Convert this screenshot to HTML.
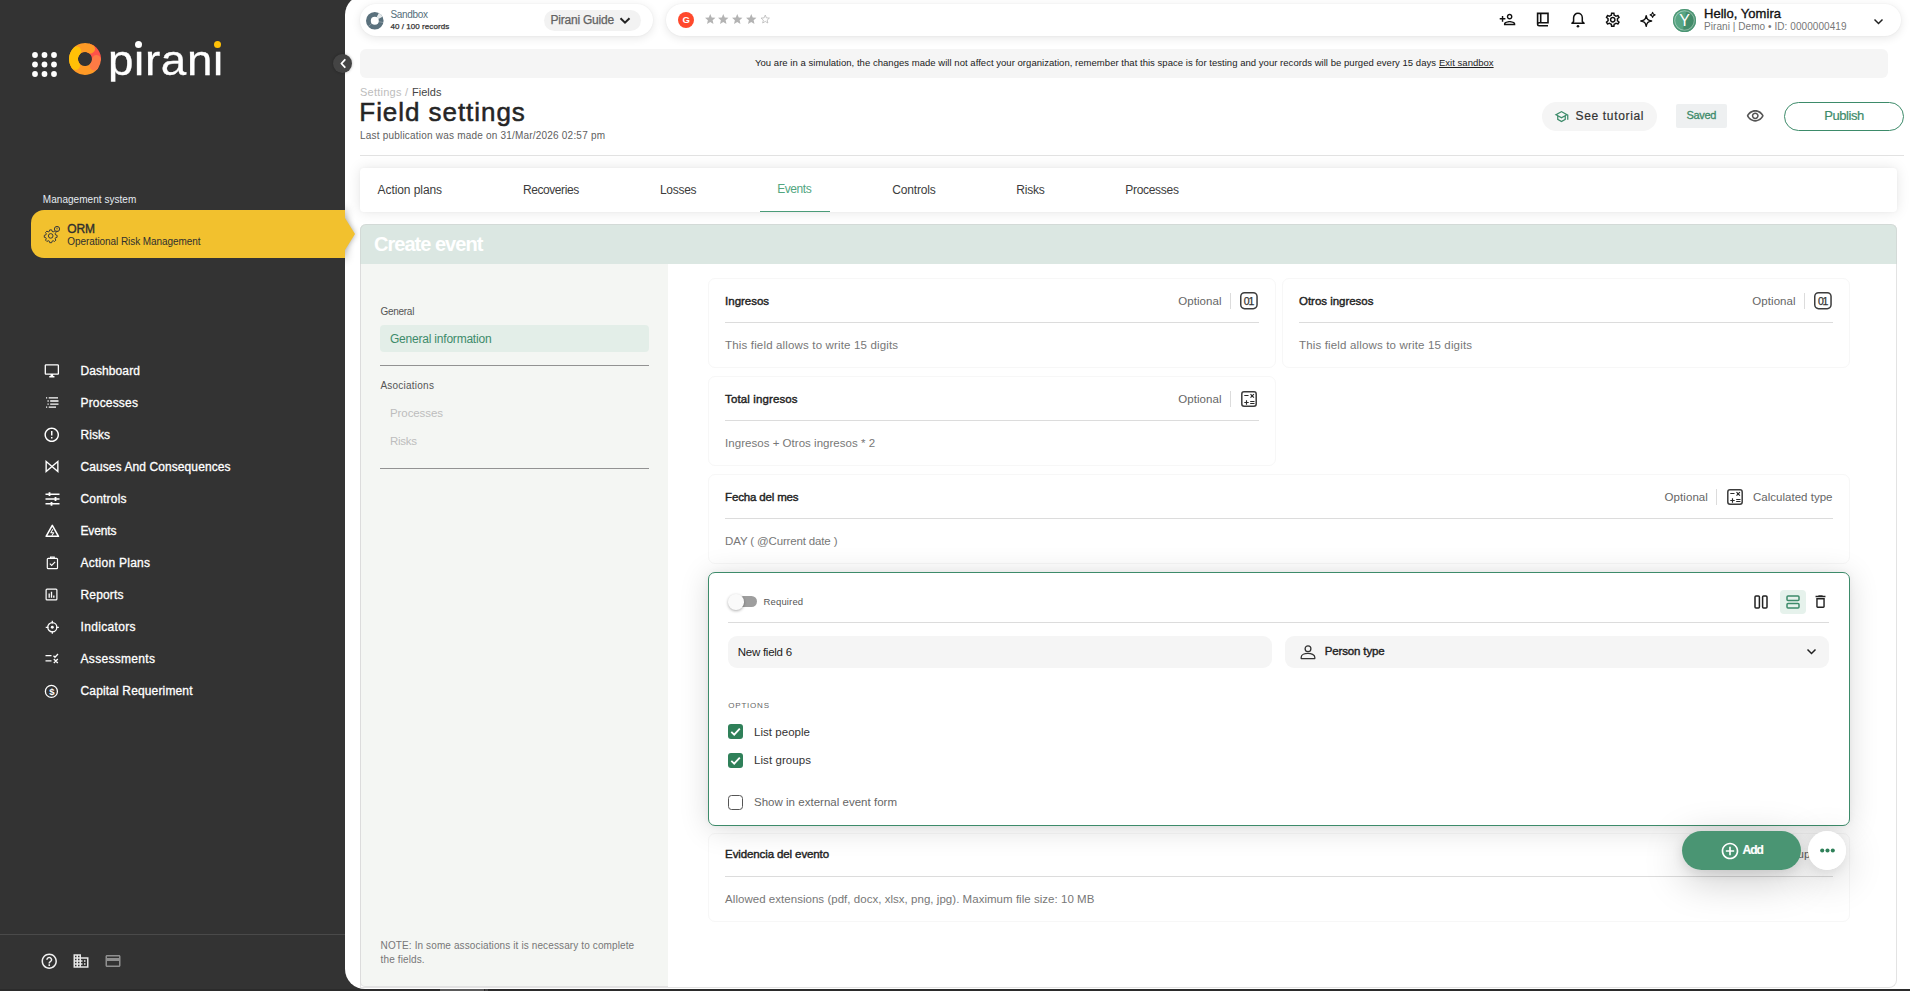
<!DOCTYPE html>
<html lang="en">
<head>
<meta charset="utf-8">
<title>Field settings - Pirani</title>
<style>
html,body{margin:0;padding:0;}
body{width:1910px;height:991px;overflow:hidden;background:#333333;font-family:"Liberation Sans",sans-serif;}
#root{position:relative;width:1910px;height:991px;overflow:hidden;background:#333333;}
.b{position:absolute;box-sizing:border-box;}
.t{position:absolute;white-space:pre;line-height:1;}
.i{position:absolute;display:block;overflow:visible;}
.card{position:absolute;box-sizing:border-box;background:#fff;border:1px solid #f7f7f7;border-radius:7px;}
.hr{position:absolute;height:1px;background:#dcdcdc;}
</style>
</head>
<body>
<div id="root">
<div class="b" style="left:345px;top:-5px;width:1565px;height:994px;background:#fff;border-radius:20px 0 0 20px;"></div>
<div class="b" style="left:0px;top:989px;width:1910px;height:2px;background:#2b2b2b;"></div>
<div class="b" style="left:440px;top:989px;width:44px;height:2px;background:#5a5a5a;"></div>
<div class="b" style="left:485px;top:989px;width:3px;height:2px;background:#444;"></div>
<aside id="sidebar">
<svg class="i" style="left:31.5px;top:52px;width:25px;height:25px;" viewBox="0 0 25 25" fill="#fff"><circle cx="3.0" cy="3.0" r="2.9"/><circle cx="12.5" cy="3.0" r="2.9"/><circle cx="22.0" cy="3.0" r="2.9"/><circle cx="3.0" cy="12.5" r="2.9"/><circle cx="12.5" cy="12.5" r="2.9"/><circle cx="22.0" cy="12.5" r="2.9"/><circle cx="3.0" cy="22.0" r="2.9"/><circle cx="12.5" cy="22.0" r="2.9"/><circle cx="22.0" cy="22.0" r="2.9"/></svg>
<svg class="i" style="left:69px;top:43px;width:32px;height:32px;" viewBox="0 0 32 32" fill="none" stroke-width="9">
<path d="M18.98 4.89A11.5 11.5 0 0 1 27.46 17.00" stroke="#ff5349"/>
<path d="M24.94 23.24A11.5 11.5 0 1 1 21.58 5.94" stroke="#ff9a26" stroke-linecap="round"/>
<path d="M27.48 16.60A11.5 11.5 0 0 1 25.18 22.92" stroke="#ff7a45" stroke-linecap="round"/>
<path d="M6.47 22.43A11.5 11.5 0 0 1 7.73 8.01" stroke="#ffc107" stroke-linecap="round"/>
</svg>
<span class="t" style="left:108.0px;top:40.00px;font-size:42px;color:#ffffff;letter-spacing:0.600px;-webkit-text-stroke:0.3px #ffffff;transform:scaleX(1.090);transform-origin:0 0;clip-path:inset(-10px -10px 0.300px -10px);">pirani</span>
<div class="b" style="left:135px;top:41px;width:8px;height:8.5px;background:#333333;"></div>
<div class="b" style="left:214px;top:41px;width:8px;height:8.5px;background:#333333;"></div>
<div class="b" style="left:135.4px;top:40.8px;width:7.0px;height:7.0px;background:#fff;border-radius:50%;"></div>
<div class="b" style="left:214.2px;top:40.8px;width:7.0px;height:7.0px;background:#ffc107;border-radius:50%;"></div>
<div class="b" style="left:333px;top:54px;width:19px;height:19px;background:#444;border-radius:50%;box-shadow:0 0 3px rgba(0,0,0,.3);"></div>
<svg class="i" style="left:338px;top:58px;width:11px;height:11px;" viewBox="0 0 11 11" fill="none" stroke="#fff" stroke-width="1.800" stroke-linecap="round" stroke-linejoin="round"><path d="M6.800 1.800L3.400 5.500L6.800 9.200"/></svg>
<span class="t" style="left:42.8px;top:195.00px;font-size:10px;color:#e6ecf2;letter-spacing:0.042px;">Management system</span>
<div class="b" style="left:31px;top:210px;width:314px;height:48px;background:#f2c12e;border-radius:13px 0 0 13px;"></div>
<div class="b" style="left:345px;top:190px;width:40px;height:90px;overflow:hidden;"><div class="b" style="left:-30px;top:20px;width:30px;height:48px;box-shadow:0 0 10px rgba(0,0,0,.42);"></div><svg class="i" style="left:-2px;top:27px;width:14px;height:34px;filter:blur(3px);" viewBox="0 0 14 34"><path d="M0 1L12 17L0 33z" fill="rgba(0,0,0,.38)"/></svg></div>
<svg class="i" style="left:345px;top:217px;width:11px;height:34px;" viewBox="0 0 11 34"><path d="M0 1L10 17L0 33z" fill="#f2c12e"/></svg>
<span class="t" style="left:67.3px;top:223.00px;font-size:12px;color:#2f2f2f;letter-spacing:-0.100px;-webkit-text-stroke:0.35px #2f2f2f;">ORM</span>
<span class="t" style="left:67.3px;top:237.00px;font-size:10px;color:#2f2f2f;letter-spacing:-0.068px;">Operational Risk Management</span>
<span class="t" style="left:80.5px;top:365.00px;font-size:12px;color:#ffffff;letter-spacing:0.085px;-webkit-text-stroke:0.3px #ffffff;">Dashboard</span>
<span class="t" style="left:80.5px;top:397.00px;font-size:12px;color:#ffffff;letter-spacing:0.171px;-webkit-text-stroke:0.3px #ffffff;">Processes</span>
<span class="t" style="left:80.5px;top:429.00px;font-size:12px;color:#ffffff;letter-spacing:0.039px;-webkit-text-stroke:0.3px #ffffff;">Risks</span>
<span class="t" style="left:80.5px;top:461.00px;font-size:12px;color:#ffffff;letter-spacing:0.086px;-webkit-text-stroke:0.3px #ffffff;">Causes And Consequences</span>
<span class="t" style="left:80.5px;top:493.00px;font-size:12px;color:#ffffff;letter-spacing:0.188px;-webkit-text-stroke:0.3px #ffffff;">Controls</span>
<span class="t" style="left:80.5px;top:525.00px;font-size:12px;color:#ffffff;letter-spacing:-0.138px;-webkit-text-stroke:0.3px #ffffff;">Events</span>
<span class="t" style="left:80.5px;top:557.00px;font-size:12px;color:#ffffff;letter-spacing:0.254px;-webkit-text-stroke:0.3px #ffffff;">Action Plans</span>
<span class="t" style="left:80.5px;top:589.00px;font-size:12px;color:#ffffff;letter-spacing:0.161px;-webkit-text-stroke:0.3px #ffffff;">Reports</span>
<span class="t" style="left:80.5px;top:621.00px;font-size:12px;color:#ffffff;letter-spacing:0.330px;-webkit-text-stroke:0.3px #ffffff;">Indicators</span>
<span class="t" style="left:80.5px;top:653.00px;font-size:12px;color:#ffffff;letter-spacing:0.314px;-webkit-text-stroke:0.3px #ffffff;">Assessments</span>
<span class="t" style="left:80.5px;top:685.00px;font-size:12px;color:#ffffff;letter-spacing:0.145px;-webkit-text-stroke:0.3px #ffffff;">Capital Requeriment</span>
<div class="b" style="left:0px;top:934px;width:345px;height:1px;background:#4a4a4a;"></div>
<svg class="i" style="left:43px;top:225px;width:18px;height:18px;" viewBox="0 0 18 18" fill="none" stroke="#3a3a3a" stroke-width="1"><path d="M7.300 4.300h2l.35 1.500 1.150.5 1.300-.8 1.400 1.400-.8 1.300.5 1.150 1.500.35v2l-1.500.35-.5 1.150.8 1.300-1.400 1.400-1.300-.8-1.150.5-.35 1.500h-2l-.35-1.500-1.150-.5-1.300.8-1.400-1.400.8-1.300-.5-1.150-1.500-.35v-2l1.500-.35.5-1.150-.8-1.300 1.400-1.400 1.300.8 1.150-.5z" transform="translate(-.6 .6)"/><circle cx="7.700" cy="10.900" r="2.300"/><circle cx="14" cy="4" r="2.600" fill="#f2c12e"/><path d="M14 2.600v1.700M14 5.100v.5" stroke-width=".9"/></svg>
<svg class="i" style="left:44.1px;top:363.0px;width:15.7px;height:15.7px;color:#ffffff;" viewBox="0 0 24 24" fill="currentColor"><path d="M21 2H3c-1.100 0-2 .9-2 2v12c0 1.100.9 2 2 2h7v2H8v2h8v-2h-2v-2h7c1.100 0 2-.9 2-2V4c0-1.100-.9-2-2-2zm0 14H3V4h18v12z"/></svg>
<svg class="i" style="left:45px;top:397.2px;width:14px;height:11px;" viewBox="0 0 14 11" fill="none" stroke="#fff" stroke-width="1.300"><path d="M1 .9h1.200M3.700 .9h9.300M2.500 4h1.200M5.200 4h8.300M2.500 7.100h1.200M5.200 7.100h8.300M1 10.100h1.200M3.700 10.100h7.300"/></svg>
<svg class="i" style="left:43.0px;top:425.9px;width:17.5px;height:17.5px;color:#ffffff;" viewBox="0 0 24 24" fill="currentColor"><path d="M11 15h2v2h-2zm0-8h2v6h-2zm.990-5C6.470 2 2 6.480 2 12s4.470 10 9.990 10C17.520 22 22 17.520 22 12S17.520 2 11.990 2zM12 20c-4.420 0-8-3.580-8-8s3.580-8 8-8 8 3.580 8 8-3.580 8-8 8z"/></svg>
<svg class="i" style="left:45px;top:460.4px;width:14px;height:13px;" viewBox="0 0 15 14" fill="none" stroke="#fff" stroke-width="1.500" stroke-linejoin="miter"><path d="M1.200 1.600L7.500 7L1.200 12.400zM13.800 1.600L7.500 7L13.800 12.400z"/></svg>
<svg class="i" style="left:44.500px;top:491.7px;width:15px;height:14px;" viewBox="0 0 15 14" fill="none" stroke="#fff" stroke-width="1.400"><path d="M.5 2.200h14M.5 7h14M.5 11.800h14"/><path d="M4.500 .3v3.800M10.500 5.100v3.800M6.500 9.900v3.800" stroke-width="1.800"/></svg>
<svg class="i" style="left:44.700px;top:523.5px;width:14.600px;height:13.700px;" viewBox="0 0 16 15" fill="none" stroke="#fff" stroke-width="1.400" stroke-linejoin="round"><path d="M8 1.500L14.800 13.500H1.200z" stroke-width="1.700"/><path d="M8.600 5.800L6.400 9.600h3.200L7.400 12.800" stroke-width="1.100"/></svg>
<svg class="i" style="left:45.600px;top:556.1px;width:12.800px;height:13.700px;" viewBox="0 0 14 15" fill="none" stroke="#fff" stroke-width="1.300"><rect x="1.400" y="2.600" width="11.200" height="11.200" rx="1"/><path d="M5 2.600V1.200h4v1.400" /><path d="M4.200 8.400l2 2 3.800-3.900"/></svg>
<svg class="i" style="left:45.400px;top:588.3000000000001px;width:13px;height:13px;" viewBox="0 0 14 14" fill="none" stroke="#fff" stroke-width="1.300"><rect x="1.200" y="1.200" width="11.600" height="11.600" rx="1"/><path d="M4.500 6v4.500M7 4v6.500M9.500 8v2.500" stroke-width="1.400"/></svg>
<svg class="i" style="left:44.700px;top:619.5px;width:14.600px;height:14.600px;" viewBox="0 0 16 16" fill="none" stroke="#fff" stroke-width="1.400"><circle cx="8" cy="8" r="5"/><path d="M8 .8v3M8 12.200v3M.8 8h3M12.200 8h3"/><circle cx="8" cy="8" r="1.600" fill="#fff" stroke="none"/></svg>
<svg class="i" style="left:45px;top:653.2px;width:14px;height:11px;" viewBox="0 0 14 11" fill="none" stroke="#fff" stroke-width="1.300"><path d="M.5 2.600h6M.5 7.800h6M8.500 2.700l1.500 1.500 3-3.200M8.800 6l4 4M12.800 6l-4 4"/></svg>
<svg class="i" style="left:44.300px;top:683.8000000000001px;width:14.800px;height:14.800px;" viewBox="0 0 16 16" fill="none" stroke="#fff" stroke-width="1.400"><circle cx="8" cy="8" r="6.500"/></svg>
<span class="t" style="left:49.3px;top:687.00px;font-size:9.5px;color:#ffffff;font-weight:700;">$</span>
<svg class="i" style="left:40.2px;top:952.0px;width:18.5px;height:18.5px;color:#f0f0f0;" viewBox="0 0 24 24" fill="currentColor"><path d="M11 18h2v-2h-2v2zm1-16C6.480 2 2 6.480 2 12s4.480 10 10 10 10-4.480 10-10S17.520 2 12 2zm0 18c-4.410 0-8-3.590-8-8s3.590-8 8-8 8 3.590 8 8-3.590 8-8 8zm0-14c-2.210 0-4 1.790-4 4h2c0-1.100.9-2 2-2s2 .9 2 2c0 2-3 1.750-3 5h2c0-2.250 3-2.500 3-5 0-2.210-1.790-4-4-4z"/></svg>
<svg class="i" style="left:72.0px;top:952.2px;width:18px;height:18px;color:#e8e8e8;" viewBox="0 0 24 24" fill="currentColor"><path d="M12 7V3H2v18h20V7H12zM6 19H4v-2h2v2zm0-4H4v-2h2v2zm0-4H4V9h2v2zm0-4H4V5h2v2zm4 12H8v-2h2v2zm0-4H8v-2h2v2zm0-4H8V9h2v2zm0-4H8V5h2v2zm10 12h-8v-2h2v-2h-2v-2h2v-2h-2V9h8v10zm-2-8h-2v2h2v-2zm0 4h-2v2h2v-2z"/></svg>
<svg class="i" style="left:103.5px;top:952.2px;width:18px;height:18px;color:#8f8f8f;" viewBox="0 0 24 24" fill="currentColor"><path d="M20 4H4c-1.110 0-1.990.890-1.990 2L2 18c0 1.110.890 2 2 2h16c1.110 0 2-.890 2-2V6c0-1.110-.890-2-2-2zm0 14H4v-6h16v6zm0-10H4V6h16v2z"/></svg>
</aside>
<header id="topbar">
<div class="b" style="left:360px;top:4px;width:293px;height:32px;background:#fff;border-radius:16px;box-shadow:0 2px 10px rgba(0,0,0,.10),0 0 2px rgba(0,0,0,.05);"></div>
<div class="b" style="left:666px;top:4px;width:1235px;height:32px;background:#fff;border-radius:16px;box-shadow:0 2px 10px rgba(0,0,0,.10),0 0 2px rgba(0,0,0,.05);"></div>
<svg class="i" style="left:366px;top:11.700px;width:17.600px;height:17.600px;" viewBox="0 0 17.600 17.600" fill="none" stroke-width="4.400"><circle cx="8.800" cy="8.800" r="6.400" stroke="#5a717d" stroke-width="4.800"/><path d="M11.800 3.150A6.400 6.400 0 0 1 14.450 5.800" stroke="#e3e8ea" stroke-width="4.800"/><path d="M8.800 8.800L13.700 .8M8.800 8.800L17.500 10.600M8.800 8.800L2 14.800" stroke="#fff" stroke-width=".5" opacity=".55"/></svg>
<span class="t" style="left:390.4px;top:10.00px;font-size:10px;color:#546e7a;letter-spacing:-0.331px;">Sandbox</span>
<span class="t" style="left:390.4px;top:23.00px;font-size:8px;color:#333;letter-spacing:0.066px;-webkit-text-stroke:0.25px #333;">40 / 100 records</span>
<div class="b" style="left:544px;top:10px;width:97px;height:21px;background:#f2f2f2;border-radius:11px;"></div>
<span class="t" style="left:550.6px;top:14.00px;font-size:12px;color:#636363;letter-spacing:-0.232px;-webkit-text-stroke:0.25px #636363;">Pirani Guide</span>
<svg class="i" style="left:619.300px;top:15.700px;width:12px;height:9px;" viewBox="0 0 12 9" fill="none" stroke="#222" stroke-width="2"><path d="M1.500 2.200L6 6.700L10.500 2.200"/></svg>
<div class="b" style="left:678px;top:12px;width:16px;height:16px;background:#ff492c;border-radius:50%;"></div>
<span class="t" style="left:682.6px;top:15.00px;font-size:9.5px;color:#fff;font-weight:700;">G</span>
<svg class="i" style="left:703.5px;top:13.4px;width:12.5px;height:12.5px;color:#b3b3b3;" viewBox="0 0 24 24" fill="currentColor"><path d="M12 17.270L18.180 21l-1.640-7.030L22 9.240l-7.190-.610L12 2 9.190 8.630 2 9.240l5.460 4.730L5.820 21z"/></svg>
<svg class="i" style="left:717.3px;top:13.4px;width:12.5px;height:12.5px;color:#b3b3b3;" viewBox="0 0 24 24" fill="currentColor"><path d="M12 17.270L18.180 21l-1.640-7.030L22 9.240l-7.190-.610L12 2 9.190 8.630 2 9.240l5.460 4.730L5.820 21z"/></svg>
<svg class="i" style="left:731.1px;top:13.4px;width:12.5px;height:12.5px;color:#b3b3b3;" viewBox="0 0 24 24" fill="currentColor"><path d="M12 17.270L18.180 21l-1.640-7.030L22 9.240l-7.190-.610L12 2 9.190 8.630 2 9.240l5.460 4.730L5.820 21z"/></svg>
<svg class="i" style="left:744.9px;top:13.4px;width:12.5px;height:12.5px;color:#b3b3b3;" viewBox="0 0 24 24" fill="currentColor"><path d="M12 17.270L18.180 21l-1.640-7.030L22 9.240l-7.190-.610L12 2 9.190 8.630 2 9.240l5.460 4.730L5.820 21z"/></svg>
<svg class="i" style="left:758.8px;top:13.4px;width:12.5px;height:12.5px;color:#b3b3b3;" viewBox="0 0 24 24" fill="currentColor"><path d="M12 17.270L18.180 21l-1.640-7.030L22 9.240l-7.190-.610L12 2 9.190 8.630 2 9.240l5.460 4.730L5.820 21z" fill="none" stroke="currentColor" stroke-width="1.800" stroke-linejoin="round" transform="translate(2.400 2.400) scale(.8)"/></svg>
<svg class="i" style="left:1499.2px;top:11.2px;width:17px;height:17px;color:#111;" viewBox="0 0 24 24" fill="currentColor"><path d="M15 12c2.210 0 4-1.790 4-4s-1.790-4-4-4-4 1.790-4 4 1.790 4 4 4zm0-6c1.100 0 2 .9 2 2s-.9 2-2 2-2-.9-2-2 .9-2 2-2zm0 8c-2.670 0-8 1.340-8 4v2h16v-2c0-2.660-5.330-4-8-4zm-6 4c.220-.720 3.310-2 6-2 2.700 0 5.800 1.290 6 2H9zm-3-3v-3h3v-2H6V7H4v3H1v2h3v3z"/></svg>
<svg class="i" style="left:1536px;top:12.400px;width:13.500px;height:14.500px;" viewBox="0 0 13.500 14.500" fill="none" stroke="#111" stroke-width="1.600"><path d="M1.600 12.300V1.400h10.400v9.400H3.100c-.8 0-1.500.6-1.500 1.500s.7 1.500 1.500 1.500h8.900"/><path d="M4.700 1.400v9.400"/></svg>
<svg class="i" style="left:1571px;top:12px;width:14px;height:16px;" viewBox="0 0 14 16" fill="none" stroke="#111" stroke-width="1.500" stroke-linejoin="round"><path d="M2.600 9.600V5.700a4.350 4.350 0 0 1 8.700 0V9.600l1.800 1.700H.9z"/><circle cx="6.950" cy="14.200" r="1.300" fill="#111" stroke="none"/></svg>
<svg class="i" style="left:1604.0px;top:11.1px;width:17.5px;height:17.5px;color:#111;" viewBox="0 0 24 24" fill="currentColor"><path d="M19.43 12.98c.04-.32.07-.64.07-.98 0-.34-.03-.66-.07-.98l2.110-1.650c.19-.15.24-.42.12-.64l-2-3.460c-.09-.16-.26-.25-.44-.25-.06 0-.12.01-.17.03l-2.490 1c-.52-.4-1.080-.73-1.690-.98l-.38-2.650C14.460 2.180 14.250 2 14 2h-4c-.25 0-.46.18-.49.42l-.38 2.650c-.61.25-1.170.59-1.690.98l-2.490-1c-.06-.02-.12-.03-.18-.03-.17 0-.34.09-.43.25l-2 3.460c-.13.22-.07.49.12.64l2.110 1.650c-.04.32-.07.65-.07.98 0 .33.03.66.07.98l-2.110 1.650c-.19.15-.24.42-.12.64l2 3.460c.09.16.26.25.44.25.06 0 .12-.01.17-.03l2.490-1c.52.4 1.080.73 1.690.98l.38 2.650c.03.24.24.42.49.42h4c.25 0 .46-.18.49-.42l.38-2.650c.61-.25 1.170-.59 1.690-.98l2.490 1c.06.02.12.03.18.03.17 0 .34-.09.43-.25l2-3.460c.12-.22.07-.49-.12-.64l-2.110-1.650zm-1.980-1.710c.04.31.05.52.05.73 0 .21-.02.43-.05.73l-.14 1.130.89.7 1.080.84-.7 1.210-1.270-.51-1.040-.42-.9.68c-.43.32-.84.56-1.250.73l-1.060.43-.16 1.130-.2 1.350h-1.400l-.19-1.350-.16-1.130-1.060-.43c-.43-.18-.83-.41-1.230-.71l-.91-.7-1.060.43-1.270.51-.7-1.210 1.080-.84.89-.7-.14-1.130c-.03-.31-.05-.54-.05-.74s.02-.43.05-.73l.14-1.130-.89-.7-1.080-.84.7-1.210 1.270.51 1.040.42.9-.68c.43-.32.84-.56 1.250-.73l1.060-.43.16-1.130.2-1.350h1.390l.19 1.350.16 1.130 1.060.43c.43.18.83.41 1.230.71l.91.7 1.060-.43 1.270-.51.7 1.210-1.070.85-.89.7.14 1.130zM12 8c-2.210 0-4 1.790-4 4s1.790 4 4 4 4-1.790 4-4-1.790-4-4-4zm0 6c-1.100 0-2-.9-2-2s.9-2 2-2 2 .9 2 2-.9 2-2 2z"/></svg>
<svg class="i" style="left:1638.500px;top:10.500px;width:18px;height:18px;" viewBox="0 0 18 18" fill="none" stroke="#111" stroke-width="1.400" stroke-linejoin="round"><path d="M7.200 4.600C7.900 8.300 8.900 9.300 12.600 10 8.900 10.700 7.900 11.700 7.200 15.400 6.500 11.700 5.500 10.700 1.800 10 5.500 9.300 6.500 8.300 7.200 4.600z"/><path d="M13.600 1.400c.3 1.700.8 2.200 2.500 2.500-1.700.3-2.200.8-2.500 2.500-.3-1.700-.8-2.200-2.500-2.500 1.700-.3 2.200-.8 2.500-2.500z" stroke-width="1.100"/></svg>
<div class="b" style="left:1673px;top:9px;width:23px;height:23px;background:linear-gradient(100deg,#5aa886 0%,#57a583 47%,#448d6b 53%,#408967 100%);border-radius:50%;box-shadow:inset 0 0 0 1.200px #4a9573,inset 0 0 0 2.200px rgba(255,255,255,.38);"></div>
<span class="t" style="left:1679.2px;top:13.00px;font-size:16px;color:#fff;">Y</span>
<span class="t" style="left:1704.0px;top:7.00px;font-size:13px;color:#111;letter-spacing:0.033px;-webkit-text-stroke:0.35px #111;">Hello, Yomira</span>
<span class="t" style="left:1704.0px;top:22.00px;font-size:10px;color:#777;letter-spacing:0.065px;">Pirani | Demo • ID: 0000000419</span>
<svg class="i" style="left:1872.500px;top:16.500px;width:11px;height:9px;" viewBox="0 0 11 9" fill="none" stroke="#222" stroke-width="1.500"><path d="M1.500 2.500L5.500 6.500L9.500 2.500"/></svg>
<div class="b" style="left:360px;top:49px;width:1528px;height:29px;background:#f5f5f5;border-radius:6px;"></div>
<span class="t" style="left:755.0px;top:58.00px;font-size:9.5px;color:#222;letter-spacing:0.035px;">You are in a simulation, the changes made will not affect your organization, remember that this space is for testing and your records will be purged every 15 days</span>
<span class="t" style="left:1439.0px;top:58.00px;font-size:9.5px;color:#222;letter-spacing:0.018px;text-decoration:underline;">Exit sandbox</span>
</header>
<main id="content">
<section id="page-header">
<span class="t" style="left:360.0px;top:87.00px;font-size:11px;color:#bdbdbd;letter-spacing:0.238px;">Settings /</span>
<span class="t" style="left:412.0px;top:87.00px;font-size:11px;color:#444;letter-spacing:0.031px;">Fields</span>
<span class="t" style="left:359.3px;top:99.00px;font-size:26px;color:#252525;letter-spacing:0.947px;-webkit-text-stroke:0.5px #252525;">Field settings</span>
<span class="t" style="left:360.0px;top:131.00px;font-size:10px;color:#606060;letter-spacing:0.205px;">Last publication was made on 31/Mar/2026 02:57 pm</span>
<div class="b" style="left:360px;top:155px;width:1544px;height:1px;background:#e2e2e2;"></div>
<div class="b" style="left:1542px;top:102px;width:115px;height:29px;background:#f5f5f5;border-radius:15px;"></div>
<svg class="i" style="left:1554.0px;top:109.0px;width:15px;height:15px;color:#3d8b6a;" viewBox="0 0 24 24" fill="currentColor"><path d="M12 3L1 9l4 2.180v6L12 21l7-3.820v-6l2-1.090V17h2V9L12 3zm6.820 6L12 12.720 5.180 9 12 5.280 18.820 9zM17 15.990l-5 2.730-5-2.730v-3.720L12 15l5-2.730v3.720z"/></svg>
<span class="t" style="left:1575.5px;top:110.00px;font-size:12px;color:#333;letter-spacing:0.663px;-webkit-text-stroke:0.2px #333;">See tutorial</span>
<div class="b" style="left:1676px;top:104px;width:51px;height:24px;background:#eef0f1;border-radius:2px;"></div>
<span class="t" style="left:1686.4px;top:110.00px;font-size:11px;color:#3d8b6a;letter-spacing:-0.301px;-webkit-text-stroke:0.3px #3d8b6a;">Saved</span>
<svg class="i" style="left:1746.3px;top:106.8px;width:18.5px;height:18.5px;color:#555;" viewBox="0 0 24 24" fill="currentColor"><path d="M12 6c3.790 0 7.170 2.130 8.820 5.500C19.170 14.870 15.790 17 12 17s-7.170-2.130-8.820-5.500C4.830 8.130 8.210 6 12 6m0-2C7 4 2.730 7.110 1 11.500 2.730 15.890 7 19 12 19s9.270-3.110 11-7.500C21.270 7.110 17 4 12 4zm0 5c1.380 0 2.500 1.120 2.500 2.500S13.380 14 12 14s-2.500-1.120-2.500-2.500S10.620 9 12 9m0-2c-2.480 0-4.500 2.020-4.500 4.500S9.520 16 12 16s4.500-2.020 4.500-4.500S14.480 7 12 7z"/></svg>
<div class="b" style="left:1784px;top:102px;width:120px;height:29px;border:1px solid #3d8b6a;border-radius:15px;background:#fff;"></div>
<span class="t" style="left:1824.3px;top:109.00px;font-size:13px;color:#3d8b6a;letter-spacing:-0.440px;-webkit-text-stroke:0.2px #3d8b6a;">Publish</span>
</section>
<nav id="tabs">
<div class="b" style="left:360px;top:168px;width:1537px;height:44px;background:#fff;border-radius:4px;box-shadow:0 0 14px rgba(0,0,0,.10),0 0 3px rgba(0,0,0,.04);"></div>
<span class="t" style="left:377.6px;top:184.00px;font-size:12px;color:#3c3c3c;letter-spacing:-0.080px;">Action plans</span>
<span class="t" style="left:522.9px;top:184.00px;font-size:12px;color:#3c3c3c;letter-spacing:-0.415px;">Recoveries</span>
<span class="t" style="left:659.9px;top:184.00px;font-size:12px;color:#3c3c3c;letter-spacing:-0.266px;">Losses</span>
<span class="t" style="left:892.3px;top:184.00px;font-size:12px;color:#3c3c3c;letter-spacing:-0.170px;">Controls</span>
<span class="t" style="left:1016.3px;top:184.00px;font-size:12px;color:#3c3c3c;letter-spacing:-0.236px;">Risks</span>
<span class="t" style="left:1125.3px;top:184.00px;font-size:12px;color:#3c3c3c;letter-spacing:-0.304px;">Processes</span>
<span class="t" style="left:777.2px;top:183.00px;font-size:12px;color:#52a680;letter-spacing:-0.438px;">Events</span>
<div class="b" style="left:760px;top:210.5px;width:70px;height:1.5px;background:#4a9b78;"></div>
</nav>
<section id="form">
<div class="b" style="left:360px;top:224px;width:1537px;height:764px;background:#fff;border:1px solid #e3e3e3;border-top:none;border-radius:6px 6px 8px 0;"></div>
<div class="b" style="left:360px;top:224px;width:1537px;height:40px;background:#dbe7e2;border-radius:6px 6px 0 0;border:1px solid #d3dad7;border-bottom:none;"></div>
<span class="t" style="left:374.0px;top:234.00px;font-size:20px;color:#ffffff;font-weight:700;letter-spacing:-0.978px;">Create event</span>
<div class="b" style="left:360px;top:264px;width:308px;height:723px;background:#f4f6f3;border-left:1px solid #dcdcdc;border-bottom:1px solid #e2e2e2;border-radius:0 0 0 5px;"></div>
<span class="t" style="left:380.4px;top:307.00px;font-size:10px;color:#555;letter-spacing:-0.263px;">General</span>
<div class="b" style="left:380px;top:325px;width:269px;height:27px;background:#e3eee8;border-radius:4px;"></div>
<span class="t" style="left:390.0px;top:333.00px;font-size:12px;color:#3d8b6a;letter-spacing:-0.211px;">General information</span>
<div class="b" style="left:380px;top:365px;width:269px;height:1px;background:#929292;"></div>
<span class="t" style="left:380.4px;top:381.00px;font-size:10px;color:#555;letter-spacing:0.236px;">Asociations</span>
<span class="t" style="left:390.0px;top:408.00px;font-size:11.5px;color:#bdbdbd;letter-spacing:-0.086px;">Processes</span>
<span class="t" style="left:390.0px;top:436.00px;font-size:11.5px;color:#bdbdbd;letter-spacing:-0.281px;">Risks</span>
<div class="b" style="left:380px;top:468px;width:269px;height:1px;background:#929292;"></div>
<span class="t" style="left:380.6px;top:941.00px;font-size:10px;color:#777;letter-spacing:0.118px;">NOTE: In some associations it is necessary to complete</span>
<span class="t" style="left:380.6px;top:955.00px;font-size:10px;color:#777;letter-spacing:0.119px;">the fields.</span>
<div class="card" style="left:708px;top:278px;width:568px;height:90px;"></div>
<span class="t" style="left:725.1px;top:296.00px;font-size:11.5px;color:#222;letter-spacing:-0.016px;-webkit-text-stroke:0.4px #222;">Ingresos</span>
<span class="t" style="left:1178.2px;top:296.00px;font-size:11.5px;color:#666;letter-spacing:0.065px;">Optional</span>
<div class="b" style="left:1230px;top:293px;width:1px;height:16px;background:#dcdcdc;"></div>
<svg class="i" style="left:1240.1999999999998px;top:292.0px;width:17.800px;height:17.400px;" viewBox="0 0 17.800 17.400"><rect x=".75" y=".75" width="16.300" height="15.900" rx="3.800" fill="none" stroke="#3c3c3c" stroke-width="1.500"/></svg>
<span class="t" style="left:1243.8px;top:296.00px;font-size:10.5px;color:#333;letter-spacing:-1.200px;-webkit-text-stroke:0.25px #333;">01</span>
<div class="hr" style="left:725px;top:322px;width:534px;background:#dcdcdc;"></div>
<span class="t" style="left:725.1px;top:340.00px;font-size:11.5px;color:#777;letter-spacing:0.158px;">This field allows to write 15 digits</span>
<div class="card" style="left:1282px;top:278px;width:568px;height:90px;"></div>
<span class="t" style="left:1299.0px;top:296.00px;font-size:11.5px;color:#222;letter-spacing:-0.029px;-webkit-text-stroke:0.4px #222;">Otros ingresos</span>
<span class="t" style="left:1752.3px;top:296.00px;font-size:11.5px;color:#666;letter-spacing:0.065px;">Optional</span>
<div class="b" style="left:1804px;top:293px;width:1px;height:16px;background:#dcdcdc;"></div>
<svg class="i" style="left:1814.3px;top:292.0px;width:17.800px;height:17.400px;" viewBox="0 0 17.800 17.400"><rect x=".75" y=".75" width="16.300" height="15.900" rx="3.800" fill="none" stroke="#3c3c3c" stroke-width="1.500"/></svg>
<span class="t" style="left:1817.9px;top:296.00px;font-size:10.5px;color:#333;letter-spacing:-1.200px;-webkit-text-stroke:0.25px #333;">01</span>
<div class="hr" style="left:1299px;top:322px;width:534px;background:#dcdcdc;"></div>
<span class="t" style="left:1299.0px;top:340.00px;font-size:11.5px;color:#777;letter-spacing:0.158px;">This field allows to write 15 digits</span>
<div class="card" style="left:708px;top:376px;width:568px;height:90px;"></div>
<span class="t" style="left:725.1px;top:394.00px;font-size:11.5px;color:#222;letter-spacing:0.118px;-webkit-text-stroke:0.4px #222;">Total ingresos</span>
<span class="t" style="left:1178.2px;top:394.00px;font-size:11.5px;color:#666;letter-spacing:0.065px;">Optional</span>
<div class="b" style="left:1230px;top:391px;width:1px;height:16px;background:#dcdcdc;"></div>
<svg class="i" style="left:1241px;top:391px;width:16px;height:16px;" viewBox="0 0 16 16"><rect x=".8" y=".8" width="14.400" height="14.400" rx="2.200" fill="none" stroke="#3c3c3c" stroke-width="1.500"/><path d="M3.300 4.500h4.200M9.500 3.200l3.400 3.400M12.900 3.200L9.500 6.600M3.300 11.500h4.400M5.500 9.300v4.400M9.200 10.500h4.300M9.200 12.500h4.300" stroke="#2a2a2a" stroke-width="1.150" fill="none"/></svg>
<div class="hr" style="left:725px;top:420px;width:534px;background:#dcdcdc;"></div>
<span class="t" style="left:725.1px;top:438.00px;font-size:11.5px;color:#777;letter-spacing:0.026px;">Ingresos + Otros ingresos * 2</span>
<div class="card" style="left:708px;top:474px;width:1142px;height:90px;"></div>
<span class="t" style="left:725.1px;top:492.00px;font-size:11.5px;color:#222;letter-spacing:-0.161px;-webkit-text-stroke:0.4px #222;">Fecha del mes</span>
<span class="t" style="left:1664.6px;top:492.00px;font-size:11.5px;color:#666;letter-spacing:0.065px;">Optional</span>
<div class="b" style="left:1716px;top:489px;width:1px;height:16px;background:#dcdcdc;"></div>
<svg class="i" style="left:1727px;top:489px;width:16px;height:16px;" viewBox="0 0 16 16"><rect x=".8" y=".8" width="14.400" height="14.400" rx="2.200" fill="none" stroke="#3c3c3c" stroke-width="1.500"/><path d="M3.300 4.500h4.200M9.500 3.200l3.400 3.400M12.900 3.200L9.500 6.600M3.300 11.500h4.400M5.500 9.300v4.400M9.200 10.500h4.300M9.200 12.500h4.300" stroke="#2a2a2a" stroke-width="1.150" fill="none"/></svg>
<span class="t" style="left:1753.0px;top:492.00px;font-size:11.5px;color:#666;letter-spacing:0.016px;">Calculated type</span>
<div class="hr" style="left:725px;top:518px;width:1108px;background:#dcdcdc;"></div>
<span class="t" style="left:725.1px;top:536.00px;font-size:11.5px;color:#777;letter-spacing:-0.152px;">DAY ( @Current date )</span>
<div class="card" style="left:708px;top:833px;width:1142px;height:89px;"></div>
<span class="t" style="left:725.1px;top:849.00px;font-size:11.5px;color:#222;letter-spacing:-0.113px;-webkit-text-stroke:0.4px #222;">Evidencia del evento</span>
<span class="t" style="left:1687.0px;top:849.00px;font-size:11.5px;color:#666;letter-spacing:0.065px;">Optional</span>
<span class="t" style="left:1775.5px;top:849.00px;font-size:11.5px;color:#666;letter-spacing:0.073px;">File upload</span>
<div class="hr" style="left:725px;top:876px;width:1108px;background:#dcdcdc;"></div>
<span class="t" style="left:725.1px;top:894.00px;font-size:11.5px;color:#777;letter-spacing:0.034px;">Allowed extensions (pdf, docx, xlsx, png, jpg). Maximum file size: 10 MB</span>
<div class="b" style="left:708px;top:572px;width:1142px;height:254px;background:#fff;border:1px solid #3d8b6a;border-radius:7px;box-shadow:0 3px 30px rgba(0,0,0,.14),0 0 6px rgba(0,0,0,.05);"></div>
<div class="b" style="left:729px;top:596px;width:28px;height:11px;background:#9e9e9e;border-radius:6px;"></div>
<div class="b" style="left:728.2px;top:594.4px;width:15.599999999999909px;height:15.600000000000023px;background:#fafafa;border-radius:50%;box-shadow:0 1px 3px rgba(0,0,0,.32);"></div>
<span class="t" style="left:763.6px;top:597.00px;font-size:9.5px;color:#555;letter-spacing:0.134px;">Required</span>
<svg class="i" style="left:1754px;top:594.500px;width:14px;height:14px;" viewBox="0 0 14 14" fill="none" stroke="#222" stroke-width="1.500"><rect x="1" y="1" width="4.400" height="12" rx="1"/><rect x="8.600" y="1" width="4.400" height="12" rx="1"/></svg>
<div class="b" style="left:1780px;top:589.5px;width:26px;height:24.0px;background:#e6f2ec;border-radius:4px;"></div>
<svg class="i" style="left:1786px;top:594.500px;width:14px;height:14px;" viewBox="0 0 14 14" fill="none" stroke="#3d8b6a" stroke-width="1.500"><rect x="1" y="1" width="12" height="4.400" rx="1"/><rect x="1" y="8.600" width="12" height="4.400" rx="1"/></svg>
<svg class="i" style="left:1811.9px;top:592.5px;width:17px;height:17px;color:#222;" viewBox="0 0 24 24" fill="currentColor"><path d="M16 9v10H8V9h8m-1.500-6h-5l-1 1H5v2h14V4h-3.500l-1-1zM18 7H6v12c0 1.100.9 2 2 2h8c1.100 0 2-.9 2-2V7z"/></svg>
<div class="hr" style="left:728px;top:622px;width:1101px;background:#dcdcdc;"></div>
<div class="b" style="left:728px;top:636px;width:544px;height:32px;background:#f5f5f5;border-radius:9px;"></div>
<span class="t" style="left:737.7px;top:647.00px;font-size:11.5px;color:#222;letter-spacing:-0.249px;">New field 6</span>
<div class="b" style="left:1285px;top:636px;width:544px;height:32px;background:#f5f5f5;border-radius:9px;"></div>
<svg class="i" style="left:1300.300px;top:644px;width:16px;height:16px;" viewBox="0 0 16 16" fill="none" stroke="#333" stroke-width="1.300"><circle cx="8" cy="4.700" r="2.900"/><path d="M1.200 14.600v-1.300c0-2.600 3.600-3.900 6.800-3.900s6.800 1.300 6.800 3.900v1.300z" stroke-linejoin="round"/></svg>
<span class="t" style="left:1324.7px;top:646.00px;font-size:11.5px;color:#222;letter-spacing:-0.138px;-webkit-text-stroke:0.4px #222;">Person type</span>
<svg class="i" style="left:1805.500px;top:647px;width:11px;height:9px;" viewBox="0 0 11 9" fill="none" stroke="#222" stroke-width="1.500"><path d="M1.500 2.500L5.500 6.500L9.500 2.500"/></svg>
<span class="t" style="left:728.3px;top:702.00px;font-size:8px;color:#666;letter-spacing:0.781px;">OPTIONS</span>
<svg class="i" style="left:728px;top:724px;width:15px;height:15px;" viewBox="0 0 15 15"><rect width="15" height="15" rx="3" fill="#2f8059"/><path d="M3.300 7.800L6.200 10.600L11.800 4.600" fill="none" stroke="#fff" stroke-width="1.800"/></svg>
<span class="t" style="left:754.0px;top:727.00px;font-size:11.5px;color:#333;letter-spacing:0.037px;">List people</span>
<svg class="i" style="left:728px;top:753px;width:15px;height:15px;" viewBox="0 0 15 15"><rect width="15" height="15" rx="3" fill="#2f8059"/><path d="M3.300 7.800L6.200 10.600L11.800 4.600" fill="none" stroke="#fff" stroke-width="1.800"/></svg>
<span class="t" style="left:754.0px;top:755.00px;font-size:11.5px;color:#333;letter-spacing:0.073px;">List groups</span>
<div class="b" style="left:728px;top:794.5px;width:15px;height:15.0px;border:1.200px solid #555;border-radius:3.500px;background:#fff;"></div>
<span class="t" style="left:754.0px;top:797.00px;font-size:11.5px;color:#666;letter-spacing:0.017px;">Show in external event form</span>
<div class="b" style="left:1682px;top:831px;width:119px;height:39px;border-radius:20px;box-shadow:0 10px 40px rgba(0,0,0,.22),0 3px 12px rgba(0,0,0,.10);"></div>
<div class="b" style="left:1808px;top:831px;width:38px;height:39px;border-radius:50%;box-shadow:0 10px 40px rgba(0,0,0,.20),0 3px 12px rgba(0,0,0,.08);"></div>
<div class="b" style="left:1682px;top:831px;width:119px;height:39px;background:#4a9573;border-radius:20px;"></div>
<svg class="i" style="left:1719.5px;top:840.8px;width:20px;height:20px;color:#fff;" viewBox="0 0 24 24" fill="currentColor"><path d="M13 7h-2v4H7v2h4v4h2v-4h4v-2h-4V7zm-1-5C6.480 2 2 6.480 2 12s4.480 10 10 10 10-4.480 10-10S17.520 2 12 2zm0 18c-4.410 0-8-3.590-8-8s3.590-8 8-8 8 3.590 8 8-3.590 8-8 8z"/></svg>
<span class="t" style="left:1742.4px;top:844.00px;font-size:12px;color:#fff;font-weight:700;letter-spacing:-0.914px;-webkit-text-stroke:0.2px #fff;">Add</span>
<div class="b" style="left:1808px;top:831px;width:38px;height:39px;background:#fff;border-radius:50%;"></div>
<svg class="i" style="left:1818.500px;top:847.500px;width:17px;height:5px;" viewBox="0 0 17 5" fill="#2f8059"><circle cx="3.200" cy="2.500" r="2.050"/><circle cx="8.500" cy="2.500" r="2.050"/><circle cx="13.800" cy="2.500" r="2.050"/></svg>
</section>
</main>
</div>
</body>
</html>
